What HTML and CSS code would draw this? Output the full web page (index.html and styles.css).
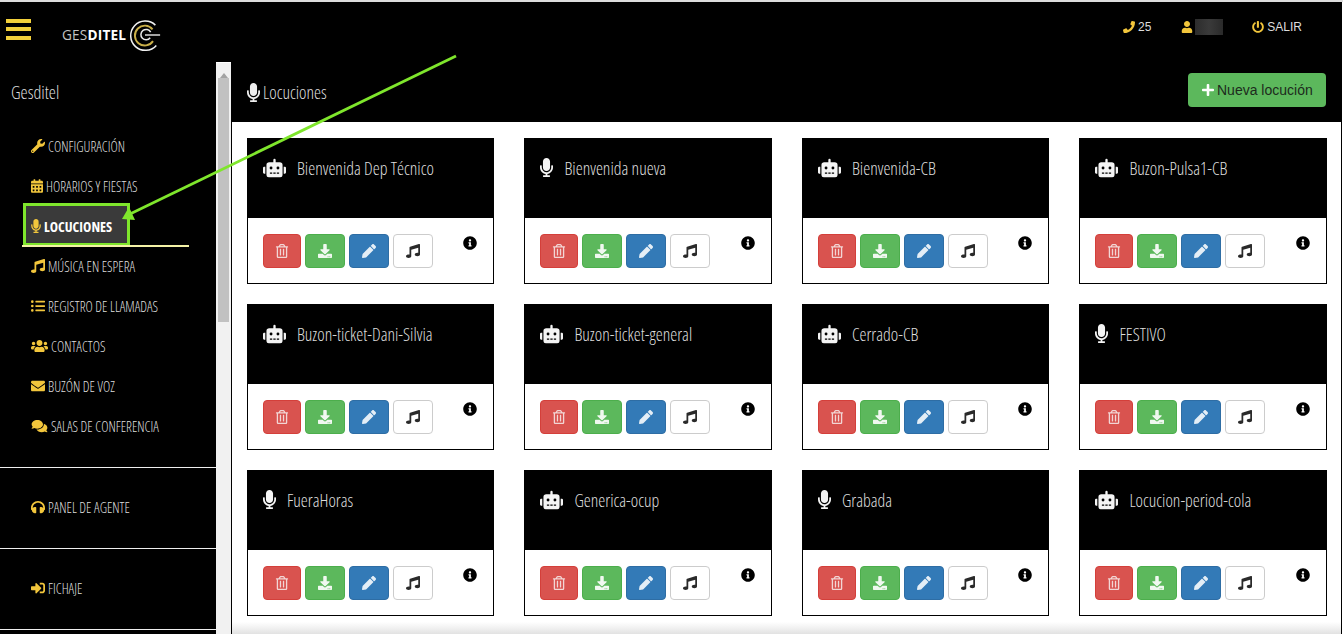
FILE: index.html
```html
<!DOCTYPE html>
<html lang="es">
<head>
    <meta charset="UTF-8">
    <title>Locuciones</title>
    <link rel="stylesheet" href="styles.css">
</head>
<body>
    <svg class="sprite" xmlns="http://www.w3.org/2000/svg">
        <symbol id="i-mic" viewBox="0 0 352 512"><path d="M176 352c53.02 0 96-42.98 96-96V96c0-53.02-42.98-96-96-96S80 42.98 80 96v160c0 53.02 42.98 96 96 96zm160-160h-16c-8.84 0-16 7.16-16 16v48c0 74.8-64.49 134.82-140.79 127.38C96.71 376.89 48 317.11 48 250.3V208c0-8.84-7.16-16-16-16H16c-8.84 0-16 7.16-16 16v40.16c0 89.64 63.97 169.55 152 181.69V464H96c-8.84 0-16 7.16-16 16v16c0 8.84 7.16 16 16 16h160c8.84 0 16-7.16 16-16v-16c0-8.84-7.16-16-16-16h-56v-33.77C285.71 418.47 352 344.9 352 256v-48c0-8.84-7.16-16-16-16z"/></symbol>
        <symbol id="i-robot" viewBox="0 0 640 512"><path d="M32,224H64V416H32A31.96166,31.96166,0,0,1,0,384V256A31.96166,31.96166,0,0,1,32,224Zm512-48V448a64.06328,64.06328,0,0,1-64,64H160a64.06328,64.06328,0,0,1-64-64V176a79.974,79.974,0,0,1,80-80H288V32a32,32,0,0,1,64,0V96H464A79.974,79.974,0,0,1,544,176ZM264,256a40,40,0,1,0-40,40A39.997,39.997,0,0,0,264,256Zm-8,128H192v32h64Zm96,0H288v32h64ZM456,256a40,40,0,1,0-40,40A39.997,39.997,0,0,0,456,256Zm-8,128H384v32h64ZM640,256V384a31.96166,31.96166,0,0,1-32,32H576V224h32A31.96166,31.96166,0,0,1,640,256Z"/></symbol>
        <symbol id="i-trash" viewBox="0 0 448 512"><path d="M268 416h24a12 12 0 0 0 12-12V188a12 12 0 0 0-12-12h-24a12 12 0 0 0-12 12v216a12 12 0 0 0 12 12zM432 80h-82.41l-34-56.7A48 48 0 0 0 274.41 0H173.59a48 48 0 0 0-41.16 23.3L98.41 80H16A16 16 0 0 0 0 96v16a16 16 0 0 0 16 16h16v336a48 48 0 0 0 48 48h288a48 48 0 0 0 48-48V128h16a16 16 0 0 0 16-16V96a16 16 0 0 0-16-16zM171.84 50.91A6 6 0 0 1 177 48h94a6 6 0 0 1 5.15 2.91L293.61 80H154.39zM368 464H80V128h288zm-212-48h24a12 12 0 0 0 12-12V188a12 12 0 0 0-12-12h-24a12 12 0 0 0-12 12v216a12 12 0 0 0 12 12z"/></symbol>
        <symbol id="i-download" viewBox="0 0 512 512"><path d="M216 0h80c13.3 0 24 10.7 24 24v168h87.7c17.8 0 26.7 21.5 14.1 34.1L269.7 378.3c-7.5 7.5-19.8 7.5-27.3 0L90.1 226.1c-12.6-12.6-3.7-34.1 14.1-34.1H192V24c0-13.3 10.7-24 24-24zm296 376v112c0 13.3-10.7 24-24 24H24c-13.3 0-24-10.7-24-24V376c0-13.3 10.7-24 24-24h146.7l49 49c20.1 20.1 52.5 20.1 72.6 0l49-49H488c13.3 0 24 10.7 24 24zm-124 88c0-11-9-20-20-20s-20 9-20 20 9 20 20 20 20-9 20-20zm64 0c0-11-9-20-20-20s-20 9-20 20 9 20 20 20 20-9 20-20z"/></symbol>
        <symbol id="i-pencil" viewBox="0 0 512 512"><path d="M497.9 142.1l-46.1 46.1c-4.7 4.7-12.3 4.7-17 0l-111-111c-4.7-4.7-4.7-12.3 0-17l46.1-46.1c18.7-18.7 49.1-18.7 67.9 0l60.1 60.1c18.8 18.7 18.8 49.1 0 67.9zM284.2 99.8L21.6 362.4.4 483.9c-2.9 16.4 11.4 30.6 27.8 27.8l121.5-21.3 262.6-262.6c4.7-4.7 4.7-12.3 0-17l-111-111c-4.8-4.7-12.4-4.7-17.1 0z"/></symbol>
        <symbol id="i-music" viewBox="0 0 512 512"><path d="M470.38 1.51L150.41 96A32 32 0 0 0 128 126.51v261.41A139 139 0 0 0 96 384c-53 0-96 28.66-96 64s43 64 96 64 96-28.66 96-64V214.32l256-75v184.61a138.4 138.4 0 0 0-32-3.93c-53 0-96 28.66-96 64s43 64 96 64 96-28.65 96-64V32a32 32 0 0 0-41.62-30.49z"/></symbol>
        <symbol id="i-info" viewBox="0 0 512 512"><path d="M256 8C119.043 8 8 119.083 8 256c0 136.997 111.043 248 248 248s248-111.003 248-248C504 119.083 392.957 8 256 8zm0 110c23.196 0 42 18.804 42 42s-18.804 42-42 42-42-18.804-42-42 18.804-42 42-42zm56 254c0 6.627-5.373 12-12 12h-88c-6.627 0-12-5.373-12-12v-24c0-6.627 5.373-12 12-12h12v-64h-12c-6.627 0-12-5.373-12-12v-24c0-6.627 5.373-12 12-12h64c6.627 0 12 5.373 12 12v100h12c6.627 0 12 5.373 12 12v24z"/></symbol>
        <symbol id="i-plus" viewBox="0 0 448 512"><path d="M416 208H272V64c0-17.67-14.33-32-32-32h-32c-17.67 0-32 14.33-32 32v144H32c-17.67 0-32 14.33-32 32v32c0 17.67 14.33 32 32 32h144v144c0 17.67 14.33 32 32 32h32c17.67 0 32-14.33 32-32V304h144c17.67 0 32-14.33 32-32v-32c0-17.67-14.33-32-32-32z"/></symbol>
        <symbol id="i-user" viewBox="0 0 448 512"><path d="M224 256c70.7 0 128-57.3 128-128S294.7 0 224 0 96 57.3 96 128s57.3 128 128 128zm89.6 32h-16.7c-22.2 10.2-46.9 16-72.9 16s-50.6-5.8-72.9-16h-16.7C60.2 288 0 348.2 0 422.4V464c0 26.5 21.5 48 48 48h352c26.5 0 48-21.5 48-48v-41.6c0-74.2-60.2-134.4-134.4-134.4z"/></symbol>
        <symbol id="i-phone" viewBox="0 0 512 512"><path d="M493.4 24.6l-104-24c-11.3-2.6-22.9 3.3-27.5 13.9l-48 112c-4.2 9.8-1.4 21.3 6.9 28l60.6 49.6c-36 76.7-98.9 140.5-177.2 177.2l-49.6-60.6c-6.8-8.3-18.2-11.1-28-6.9l-112 48C3.9 366.5-2 378.1.6 389.4l24 104C27.9 504.2 37.5 512 48 512c256.1 0 464-207.5 464-464 0-11.2-7.7-20.9-18.6-23.4z"/></symbol>
        <symbol id="i-power" viewBox="0 0 512 512"><path d="M400 54.1c63 45 104 118.6 104 201.9 0 136.8-110.8 247.7-247.5 248C120 504.3 8.2 393 8 256.4 7.9 173.1 48.9 99.3 111.8 54.2c11.7-8.3 28-4.8 35 7.7L162.6 90c5.9 10.5 3.1 23.8-6.6 31-41.5 30.8-68 79.6-68 134.9-.1 92.3 74.5 168.1 168 168.1 91.6 0 168.6-74.2 168-169.1-.3-51.8-24.7-101.8-68.1-134-9.7-7.2-12.4-20.5-6.5-30.9l15.8-28.1c7-12.4 23.2-16.1 34.8-7.8zM296 264V24c0-13.3-10.7-24-24-24h-40c-13.3 0-24 10.7-24 24v240c0 13.3 10.7 24 24 24h40c13.3 0 24-10.7 24-24z"/></symbol>
        <symbol id="i-wrench" viewBox="0 0 512 512"><path d="M507.73 109.1c-2.24-9.03-13.54-12.09-20.12-5.51l-74.36 74.36-67.88-11.31-11.31-67.88 74.36-74.36c6.62-6.62 3.43-17.9-5.66-20.16-47.38-11.74-99.55.91-136.58 37.93-39.64 39.64-50.55 97.1-34.05 147.2L18.74 402.76c-24.99 24.99-24.99 65.51 0 90.5 24.99 24.99 65.51 24.99 90.5 0l213.21-213.21c50.12 16.71 107.47 5.68 147.37-34.22 37.07-37.07 49.7-89.32 37.91-136.73zM64 472c-13.25 0-24-10.75-24-24 0-13.26 10.75-24 24-24s24 10.74 24 24c0 13.25-10.75 24-24 24z"/></symbol>
        <symbol id="i-calendar" viewBox="0 0 448 512"><path d="M0 464c0 26.5 21.5 48 48 48h352c26.5 0 48-21.5 48-48V192H0v272zm320-196c0-6.6 5.4-12 12-12h40c6.6 0 12 5.4 12 12v40c0 6.6-5.4 12-12 12h-40c-6.6 0-12-5.4-12-12v-40zm0 128c0-6.6 5.4-12 12-12h40c6.6 0 12 5.4 12 12v40c0 6.6-5.4 12-12 12h-40c-6.6 0-12-5.4-12-12v-40zM192 268c0-6.6 5.4-12 12-12h40c6.6 0 12 5.4 12 12v40c0 6.6-5.4 12-12 12h-40c-6.6 0-12-5.4-12-12v-40zm0 128c0-6.6 5.4-12 12-12h40c6.6 0 12 5.4 12 12v40c0 6.6-5.4 12-12 12h-40c-6.6 0-12-5.4-12-12v-40zM64 268c0-6.6 5.4-12 12-12h40c6.6 0 12 5.4 12 12v40c0 6.6-5.4 12-12 12H76c-6.6 0-12-5.4-12-12v-40zm0 128c0-6.6 5.4-12 12-12h40c6.6 0 12 5.4 12 12v40c0 6.6-5.4 12-12 12H76c-6.6 0-12-5.4-12-12v-40zM400 64h-48V16c0-8.8-7.2-16-16-16h-32c-8.8 0-16 7.2-16 16v48H160V16c0-8.8-7.2-16-16-16h-32c-8.8 0-16 7.2-16 16v48H48C21.5 64 0 85.5 0 112v48h448v-48c0-26.5-21.5-48-48-48z"/></symbol>
        <symbol id="i-list" viewBox="0 0 512 512"><path d="M48 48a48 48 0 1 0 48 48 48 48 0 0 0-48-48zm0 160a48 48 0 1 0 48 48 48 48 0 0 0-48-48zm0 160a48 48 0 1 0 48 48 48 48 0 0 0-48-48zm448 16H176a16 16 0 0 0-16 16v32a16 16 0 0 0 16 16h320a16 16 0 0 0 16-16v-32a16 16 0 0 0-16-16zm0-320H176a16 16 0 0 0-16 16v32a16 16 0 0 0 16 16h320a16 16 0 0 0 16-16V80a16 16 0 0 0-16-16zm0 160H176a16 16 0 0 0-16 16v32a16 16 0 0 0 16 16h320a16 16 0 0 0 16-16v-32a16 16 0 0 0-16-16z"/></symbol>
        <symbol id="i-users" viewBox="0 0 640 512"><path d="M96 224c35.3 0 64-28.7 64-64s-28.7-64-64-64-64 28.7-64 64 28.7 64 64 64zm448 0c35.3 0 64-28.7 64-64s-28.7-64-64-64-64 28.7-64 64 28.7 64 64 64zm32 32h-64c-17.6 0-33.5 7.1-45.1 18.6 40.3 22.1 68.9 62 75.1 109.4h66c17.7 0 32-14.3 32-32v-32c0-35.3-28.7-64-64-64zm-256 0c61.9 0 112-50.1 112-112S381.9 32 320 32 208 82.1 208 144s50.1 112 112 112zm76.8 32h-8.3c-20.8 10-43.9 16-68.5 16s-47.6-6-68.5-16h-8.3C179.6 288 128 339.6 128 403.2V432c0 26.5 21.5 48 48 48h288c26.5 0 48-21.5 48-48v-28.8c0-63.6-51.6-115.2-115.2-115.2zm-223.7-13.4C161.5 263.1 145.6 256 128 256H64c-35.3 0-64 28.7-64 64v32c0 17.7 14.3 32 32 32h65.9c6.3-47.4 34.9-87.3 75.2-109.4z"/></symbol>
        <symbol id="i-envelope" viewBox="0 0 512 512"><path d="M502.3 190.8c3.9-3.1 9.7-.2 9.7 4.7V400c0 26.5-21.5 48-48 48H48c-26.5 0-48-21.5-48-48V195.6c0-5 5.7-7.8 9.7-4.7 22.4 17.4 52.1 39.5 154.1 113.6 21.1 15.4 56.7 47.8 92.2 47.6 35.7.3 72-32.8 92.3-47.6 102-74.1 131.6-96.3 154-113.7zM256 320c23.2.4 56.6-29.2 73.4-41.4 132.7-96.3 142.8-104.7 173.4-128.7 5.8-4.5 9.2-11.5 9.2-18.9v-19c0-26.5-21.5-48-48-48H48C21.5 64 0 85.5 0 112v19c0 7.4 3.4 14.3 9.2 18.9 30.6 23.9 40.7 32.4 173.4 128.7 16.8 12.2 50.2 41.8 73.4 41.4z"/></symbol>
        <symbol id="i-comments" viewBox="0 0 576 512"><path d="M416 192c0-88.4-93.1-160-208-160S0 103.6 0 192c0 34.3 14.1 65.9 38 92-13.4 30.2-35.5 54.2-35.8 54.5-2.2 2.3-2.8 5.7-1.5 8.7S4.8 352 8 352c36.6 0 66.9-12.3 88.7-25 32.2 15.7 70.3 25 111.3 25 114.9 0 208-71.6 208-160zm122 220c23.9-26 38-57.7 38-92 0-66.9-53.5-124.2-129.3-148.1.9 6.6 1.3 13.3 1.3 20.1 0 105.9-107.7 192-240 192-10.8 0-21.3-.8-31.7-1.9C207.8 439.6 281.8 480 368 480c41 0 79.1-9.2 111.3-25 21.8 12.7 52.1 25 88.7 25 3.2 0 6.1-1.9 7.3-4.8 1.3-2.9.7-6.3-1.5-8.7-.3-.3-22.4-24.2-35.8-54.5z"/></symbol>
        <symbol id="i-headphones" viewBox="0 0 512 512"><path d="M256 32C114.52 32 0 146.496 0 288v48a32 32 0 0 0 17.689 28.622l14.383 7.191C34.083 431.903 83.421 480 144 480h24c13.255 0 24-10.745 24-24V280c0-13.255-10.745-24-24-24h-24c-31.342 0-59.671 12.879-80 33.627V288c0-105.869 86.131-192 192-192s192 86.131 192 192v1.627C427.671 268.879 399.342 256 368 256h-24c-13.255 0-24 10.745-24 24v176c0 13.255 10.745 24 24 24h24c60.579 0 109.917-48.098 111.928-108.187l14.382-7.191A32 32 0 0 0 512 336v-48c0-141.504-114.52-256-256-256z"/></symbol>
        <symbol id="i-signin" viewBox="0 0 512 512"><path d="M416 448h-84c-6.6 0-12-5.4-12-12v-40c0-6.6 5.4-12 12-12h84c17.7 0 32-14.3 32-32V160c0-17.7-14.3-32-32-32h-84c-6.6 0-12-5.4-12-12V76c0-6.6 5.4-12 12-12h84c53 0 96 43 96 96v192c0 53-43 96-96 96zm-47-201L201 79c-15-15-41-4.5-41 17v96H24c-13.3 0-24 10.7-24 24v96c0 13.3 10.7 24 24 24h136v96c0 21.5 26 32 41 17l168-168c9.3-9.4 9.3-24.6 0-34z"/></symbol>
    </svg>

    <header class="topbar">
        <div class="burger"><span></span><span></span><span></span></div>
        <div class="logo">
            <span class="logo-text">GES<b>DITEL</b></span>
            <svg class="logo-mark" viewBox="0 0 36 36">
                <path d="M29 7.5A15.5 15.5 0 1 0 30 29" fill="none" stroke="#f2f2f2" stroke-width="1.6"/>
                <path d="M26 12A10.5 10.5 0 1 0 26.5 24.5" fill="none" stroke="#cbb04a" stroke-width="2"/>
                <path d="M24 15A5.5 5.5 0 1 0 23.5 21" fill="none" stroke="#e8e8e8" stroke-width="1.6"/>
                <path d="M18 18H34" stroke="#d8d8d8" stroke-width="1.6"/>
            </svg>
        </div>
        <div class="top-info">
            <span class="top-item"><svg class="ic ic-top"><use href="#i-phone"/></svg>25</span>
            <span class="top-item top-user"><svg class="ic ic-top"><use href="#i-user"/></svg><span class="blurred"></span></span>
            <span class="top-item"><svg class="ic ic-top"><use href="#i-power"/></svg>SALIR</span>
        </div>
    </header>

    <div class="layout">
        <aside class="sidebar">
            <div class="side-title">Gesditel</div>
            <ul class="nav">
                <li><svg class="ic ic-nav"><use href="#i-wrench"/></svg>CONFIGURACIÓN</li>
                <li><svg class="ic ic-nav ic-cal"><use href="#i-calendar"/></svg>HORARIOS Y FIESTAS</li>
                <li class="active"><div class="active-box"><svg class="ic ic-nav ic-narrow"><use href="#i-mic"/></svg>LOCUCIONES</div></li>
                <li><svg class="ic ic-nav"><use href="#i-music"/></svg>MÚSICA EN ESPERA</li>
                <li><svg class="ic ic-nav"><use href="#i-list"/></svg>REGISTRO DE LLAMADAS</li>
                <li><svg class="ic ic-nav ic-wide"><use href="#i-users"/></svg>CONTACTOS</li>
                <li><svg class="ic ic-nav"><use href="#i-envelope"/></svg>BUZÓN DE VOZ</li>
                <li><svg class="ic ic-nav ic-wide"><use href="#i-comments"/></svg>SALAS DE CONFERENCIA</li>
            </ul>
            <div class="side-block"><svg class="ic ic-nav"><use href="#i-headphones"/></svg>PANEL DE AGENTE</div>
            <div class="side-block"><svg class="ic ic-nav"><use href="#i-signin"/></svg>FICHAJE</div>
        </aside>

        <div class="scrollbar"><div class="scroll-up"></div><div class="scroll-thumb"></div></div>

        <main class="main">
            <div class="page-head">
                <h1><svg class="ic ic-h1"><use href="#i-mic"/></svg>Locuciones</h1>
                <button class="btn-new"><svg class="ic ic-plus"><use href="#i-plus"/></svg>Nueva locución</button>
            </div>
            <div class="cards">
                <div class="card">
                    <div class="card-head"><svg class="ic ic-robot"><use href="#i-robot"/></svg>Bienvenida Dep Técnico</div>
                    <div class="card-body">
                        <button class="btn red"><svg class="ic ic-btn"><use href="#i-trash"/></svg></button>
                        <button class="btn green"><svg class="ic ic-btn"><use href="#i-download"/></svg></button>
                        <button class="btn blue"><svg class="ic ic-btn"><use href="#i-pencil"/></svg></button>
                        <button class="btn plain"><svg class="ic ic-btn"><use href="#i-music"/></svg></button>
                        <svg class="ic ic-info"><use href="#i-info"/></svg>
                    </div>
                </div>
                <div class="card">
                    <div class="card-head"><svg class="ic ic-micro"><use href="#i-mic"/></svg>Bienvenida nueva</div>
                    <div class="card-body">
                        <button class="btn red"><svg class="ic ic-btn"><use href="#i-trash"/></svg></button>
                        <button class="btn green"><svg class="ic ic-btn"><use href="#i-download"/></svg></button>
                        <button class="btn blue"><svg class="ic ic-btn"><use href="#i-pencil"/></svg></button>
                        <button class="btn plain"><svg class="ic ic-btn"><use href="#i-music"/></svg></button>
                        <svg class="ic ic-info"><use href="#i-info"/></svg>
                    </div>
                </div>
                <div class="card">
                    <div class="card-head"><svg class="ic ic-robot"><use href="#i-robot"/></svg>Bienvenida-CB</div>
                    <div class="card-body">
                        <button class="btn red"><svg class="ic ic-btn"><use href="#i-trash"/></svg></button>
                        <button class="btn green"><svg class="ic ic-btn"><use href="#i-download"/></svg></button>
                        <button class="btn blue"><svg class="ic ic-btn"><use href="#i-pencil"/></svg></button>
                        <button class="btn plain"><svg class="ic ic-btn"><use href="#i-music"/></svg></button>
                        <svg class="ic ic-info"><use href="#i-info"/></svg>
                    </div>
                </div>
                <div class="card">
                    <div class="card-head"><svg class="ic ic-robot"><use href="#i-robot"/></svg>Buzon-Pulsa1-CB</div>
                    <div class="card-body">
                        <button class="btn red"><svg class="ic ic-btn"><use href="#i-trash"/></svg></button>
                        <button class="btn green"><svg class="ic ic-btn"><use href="#i-download"/></svg></button>
                        <button class="btn blue"><svg class="ic ic-btn"><use href="#i-pencil"/></svg></button>
                        <button class="btn plain"><svg class="ic ic-btn"><use href="#i-music"/></svg></button>
                        <svg class="ic ic-info"><use href="#i-info"/></svg>
                    </div>
                </div>
                <div class="card">
                    <div class="card-head"><svg class="ic ic-robot"><use href="#i-robot"/></svg>Buzon-ticket-Dani-Silvia</div>
                    <div class="card-body">
                        <button class="btn red"><svg class="ic ic-btn"><use href="#i-trash"/></svg></button>
                        <button class="btn green"><svg class="ic ic-btn"><use href="#i-download"/></svg></button>
                        <button class="btn blue"><svg class="ic ic-btn"><use href="#i-pencil"/></svg></button>
                        <button class="btn plain"><svg class="ic ic-btn"><use href="#i-music"/></svg></button>
                        <svg class="ic ic-info"><use href="#i-info"/></svg>
                    </div>
                </div>
                <div class="card">
                    <div class="card-head"><svg class="ic ic-robot"><use href="#i-robot"/></svg>Buzon-ticket-general</div>
                    <div class="card-body">
                        <button class="btn red"><svg class="ic ic-btn"><use href="#i-trash"/></svg></button>
                        <button class="btn green"><svg class="ic ic-btn"><use href="#i-download"/></svg></button>
                        <button class="btn blue"><svg class="ic ic-btn"><use href="#i-pencil"/></svg></button>
                        <button class="btn plain"><svg class="ic ic-btn"><use href="#i-music"/></svg></button>
                        <svg class="ic ic-info"><use href="#i-info"/></svg>
                    </div>
                </div>
                <div class="card">
                    <div class="card-head"><svg class="ic ic-robot"><use href="#i-robot"/></svg>Cerrado-CB</div>
                    <div class="card-body">
                        <button class="btn red"><svg class="ic ic-btn"><use href="#i-trash"/></svg></button>
                        <button class="btn green"><svg class="ic ic-btn"><use href="#i-download"/></svg></button>
                        <button class="btn blue"><svg class="ic ic-btn"><use href="#i-pencil"/></svg></button>
                        <button class="btn plain"><svg class="ic ic-btn"><use href="#i-music"/></svg></button>
                        <svg class="ic ic-info"><use href="#i-info"/></svg>
                    </div>
                </div>
                <div class="card">
                    <div class="card-head"><svg class="ic ic-micro"><use href="#i-mic"/></svg>FESTIVO</div>
                    <div class="card-body">
                        <button class="btn red"><svg class="ic ic-btn"><use href="#i-trash"/></svg></button>
                        <button class="btn green"><svg class="ic ic-btn"><use href="#i-download"/></svg></button>
                        <button class="btn blue"><svg class="ic ic-btn"><use href="#i-pencil"/></svg></button>
                        <button class="btn plain"><svg class="ic ic-btn"><use href="#i-music"/></svg></button>
                        <svg class="ic ic-info"><use href="#i-info"/></svg>
                    </div>
                </div>
                <div class="card">
                    <div class="card-head"><svg class="ic ic-micro"><use href="#i-mic"/></svg>FueraHoras</div>
                    <div class="card-body">
                        <button class="btn red"><svg class="ic ic-btn"><use href="#i-trash"/></svg></button>
                        <button class="btn green"><svg class="ic ic-btn"><use href="#i-download"/></svg></button>
                        <button class="btn blue"><svg class="ic ic-btn"><use href="#i-pencil"/></svg></button>
                        <button class="btn plain"><svg class="ic ic-btn"><use href="#i-music"/></svg></button>
                        <svg class="ic ic-info"><use href="#i-info"/></svg>
                    </div>
                </div>
                <div class="card">
                    <div class="card-head"><svg class="ic ic-robot"><use href="#i-robot"/></svg>Generica-ocup</div>
                    <div class="card-body">
                        <button class="btn red"><svg class="ic ic-btn"><use href="#i-trash"/></svg></button>
                        <button class="btn green"><svg class="ic ic-btn"><use href="#i-download"/></svg></button>
                        <button class="btn blue"><svg class="ic ic-btn"><use href="#i-pencil"/></svg></button>
                        <button class="btn plain"><svg class="ic ic-btn"><use href="#i-music"/></svg></button>
                        <svg class="ic ic-info"><use href="#i-info"/></svg>
                    </div>
                </div>
                <div class="card">
                    <div class="card-head"><svg class="ic ic-micro"><use href="#i-mic"/></svg>Grabada</div>
                    <div class="card-body">
                        <button class="btn red"><svg class="ic ic-btn"><use href="#i-trash"/></svg></button>
                        <button class="btn green"><svg class="ic ic-btn"><use href="#i-download"/></svg></button>
                        <button class="btn blue"><svg class="ic ic-btn"><use href="#i-pencil"/></svg></button>
                        <button class="btn plain"><svg class="ic ic-btn"><use href="#i-music"/></svg></button>
                        <svg class="ic ic-info"><use href="#i-info"/></svg>
                    </div>
                </div>
                <div class="card">
                    <div class="card-head"><svg class="ic ic-robot"><use href="#i-robot"/></svg>Locucion-period-cola</div>
                    <div class="card-body">
                        <button class="btn red"><svg class="ic ic-btn"><use href="#i-trash"/></svg></button>
                        <button class="btn green"><svg class="ic ic-btn"><use href="#i-download"/></svg></button>
                        <button class="btn blue"><svg class="ic ic-btn"><use href="#i-pencil"/></svg></button>
                        <button class="btn plain"><svg class="ic ic-btn"><use href="#i-music"/></svg></button>
                        <svg class="ic ic-info"><use href="#i-info"/></svg>
                    </div>
                </div>
            </div>
        </main>
    </div>

    <!-- annotation arrow drawn over the screenshot -->
    <svg class="arrow" viewBox="0 0 1343 634">
        <path d="M456 56L130 214" stroke="#7fe62c" stroke-width="2.8" fill="none"/>
        <path d="M122 219L129 207L135 220Z" fill="#7fe62c"/>
    </svg>
</body>
</html>
```

FILE: styles.css
```css
* {
    box-sizing: border-box;
}
html, body {
    margin: 0;
    height: 634px;
    overflow: hidden;
}
body {
    background-color: #fff;
    border-top: 2px solid #dcdcdc;
    font-family: "Open Sans", sans-serif;
    font-stretch: 75%;
    font-weight: 300;
    position: relative;
}
.sprite {
    display: none;
}
.ic {
    display: block;
    flex: none;
    fill: currentColor;
}

/* top bar */
.topbar {
    display: flex;
    align-items: center;
    height: 60px;
    margin-right: 1px;
    padding: 0 40px 0 6px;
    background-color: #000;
}
.burger {
    width: 25px;
    margin-top: -1px;
}
.burger span {
    display: block;
    height: 4px;
    margin-bottom: 4.5px;
    background-color: #f2d03b;
}
.logo {
    display: flex;
    align-items: center;
    margin-left: 31px;
    margin-top: 5px;
}
.logo-text {
    font-stretch: 100%;
    font-size: 13.6px;
    font-weight: 400;
    letter-spacing: 0.2px;
    color: #c4c4c4;
}
.logo-text b {
    color: #fff;
}
.logo-mark {
    display: block;
    width: 34px;
    height: 34px;
    margin-left: 2px;
}
.top-info {
    display: flex;
    align-items: center;
    margin-left: auto;
    margin-top: -10px;
    font-family: "Liberation Sans", Arial, sans-serif;
    font-stretch: 100%;
    font-weight: 400;
    font-size: 12px;
    color: #ddd;
}
.top-item {
    display: flex;
    align-items: center;
    gap: 3px;
}
.top-user {
    margin: 0 29px 0 30px;
}
.top-user .ic-top {
    margin-right: -1px;
}
.ic-top {
    width: 12px;
    height: 12px;
    color: #f2c63c;
}
.blurred {
    width: 28px;
    height: 16px;
    background: linear-gradient(90deg, #2c2c2c, #3a3a3a 50%, #2a2a2a);
}

/* layout */
.layout {
    display: flex;
    height: 572px;
    margin-right: 1px;
}
.sidebar {
    width: 216px;
    flex: none;
    background-color: #000;
    color: #ddd;
    font-size: 13.8px;
}
.side-title {
    height: 64px;
    padding: 18px 0 0 11px;
    font-size: 18px;
    line-height: 24px;
    color: #ddd;
}
.nav {
    list-style: none;
    margin: 0;
    padding: 0;
    height: 342px;
    border-bottom: 1px solid #eee;
}
.nav li {
    display: flex;
    align-items: center;
    gap: 3px;
    height: 40px;
    padding-left: 31px;
}
.nav li.active {
    width: 167px;
    margin-left: 22px;
    margin-bottom: -1px;
    padding-left: 1px;
    height: 41px;
    border-bottom: 2px solid #f4f2a6;
}
.active-box {
    display: flex;
    align-items: center;
    gap: 3px;
    width: 107px;
    height: 42px;
    margin-top: -3px;
    padding: 3px 0 0 5px;
    background-color: #3a3a3a;
    border: 3px solid #7fe62c;
    border-bottom-width: 2px;
    font-size: 14px;
    font-weight: 700;
    color: #fff;
}
.ic-nav {
    width: 14px;
    height: 14px;
    color: #f2c63c;
}
.ic-wide {
    width: 17px;
}
.ic-cal {
    width: 12px;
}
.ic-narrow {
    width: 10px;
}
.side-block {
    display: flex;
    align-items: center;
    gap: 3px;
    height: 81px;
    padding: 0 0 2px 31px;
    border-bottom: 1px solid #eee;
}

/* fake browser scrollbar of the side menu */
.scrollbar {
    width: 15px;
    flex: none;
    margin-top: 1px;
    background-color: #f1f1f1;
    padding: 0 2px;
}
.scroll-up {
    width: 0;
    height: 15px;
    margin: 0 auto;
    border: 4px solid transparent;
    border-top-width: 5px;
    border-bottom: 5px solid #a3a3a3;
}
.scroll-thumb {
    height: 244px;
    background-color: #c1c1c1;
}

/* main */
.main {
    flex: 1;
    min-width: 0;
    display: flex;
    flex-direction: column;
    border-left: 1px solid #000;
    border-right: 1px solid #000;
}
.page-head {
    display: flex;
    align-items: center;
    justify-content: space-between;
    height: 60px;
    padding: 0 15px;
    flex: none;
    background-color: #000;
}
.page-head h1 {
    display: flex;
    align-items: center;
    gap: 3px;
    margin: 0;
    font-size: 17.7px;
    font-weight: 300;
    color: #ddd;
}
.ic-h1 {
    width: 13px;
    height: 19px;
    color: #eee;
}
.btn-new {
    display: flex;
    align-items: center;
    gap: 3px;
    align-self: flex-start;
    width: 138px;
    height: 34px;
    margin-top: 11px;
    padding: 0 0 0 14px;
    border: none;
    border-radius: 4px;
    background-color: #5cb85c;
    color: #1d2b1d;
    font-family: "Liberation Sans", Arial, sans-serif;
    font-stretch: 100%;
    font-size: 14px;
    font-weight: 400;
}
.ic-plus {
    width: 12px;
    height: 14px;
    color: #fff;
}
.cards {
    flex: 1;
    display: grid;
    grid-template-columns: repeat(4, 1fr);
    grid-auto-rows: 146px;
    gap: 20px 30px;
    padding: 16px 14.1px 0 14.9px;
    background: linear-gradient(#fff 500px, #e2e2e2);
}
.card-head {
    display: flex;
    align-items: flex-start;
    gap: 11px;
    height: 80px;
    padding: 20px 16px 0;
    background-color: #000;
    color: #ddd;
    font-size: 17.7px;
    line-height: 21px;
}
.ic-robot {
    width: 23px;
    height: 20px;
    color: #f4f4f4;
}
.ic-micro {
    width: 13px;
    height: 19px;
    color: #f4f4f4;
}
.card-body {
    display: flex;
    gap: 4px;
    height: 66px;
    padding: 16px 16px 0 15px;
    background-color: #fff;
    border: 1px solid #000;
    border-top: none;
}
.btn {
    display: flex;
    align-items: center;
    justify-content: center;
    width: 40px;
    height: 34px;
    padding: 0;
    border: 1px solid transparent;
    border-radius: 4px;
    color: #fff;
}
.btn.red {
    width: 38px;
    background-color: #d9534f;
    border-color: #d43f3a;
    color: #f2d6d5;
}
.btn.green {
    background-color: #5cb85c;
    border-color: #4cae4c;
    color: #f0f8f0;
}
.btn.blue {
    background-color: #337ab7;
    border-color: #2e6da4;
    color: #e4eef6;
}
.btn.plain {
    background-color: #fff;
    border-color: #ccc;
    color: #2a2a2a;
}
.ic-btn {
    width: 14px;
    height: 14px;
}
.ic-info {
    width: 14px;
    height: 14px;
    margin-left: auto;
    margin-top: 2px;
    color: #000;
}
.arrow {
    position: absolute;
    top: -2px;
    left: 0;
    width: 1343px;
    height: 634px;
    pointer-events: none;
}
```
